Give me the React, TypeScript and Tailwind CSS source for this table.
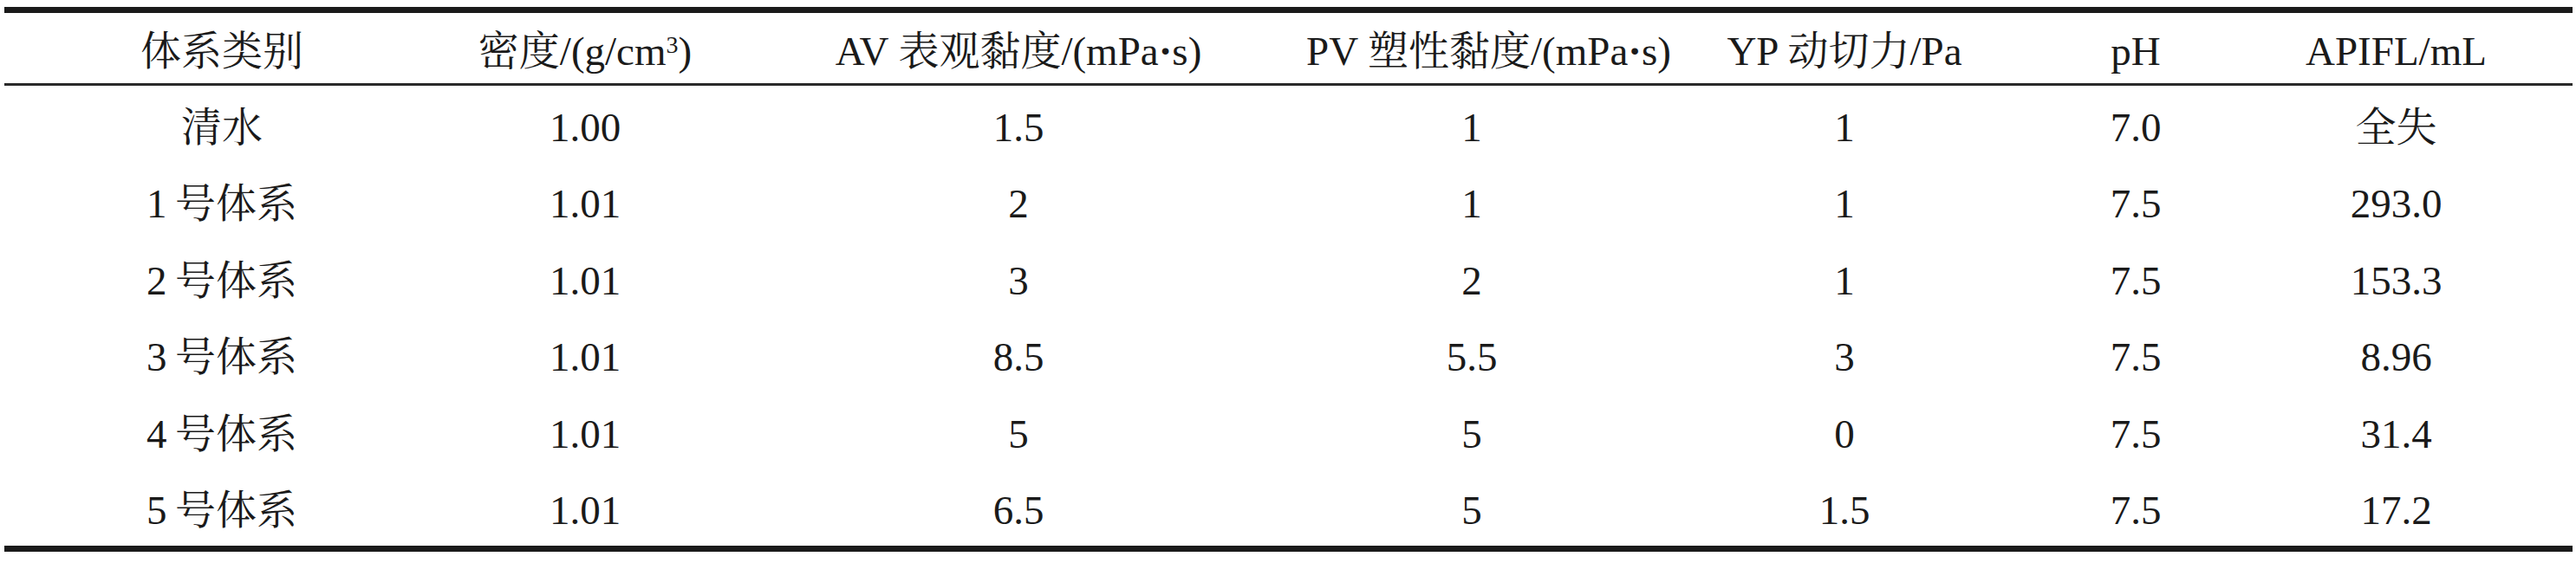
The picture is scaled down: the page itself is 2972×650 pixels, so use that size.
import React from "react";

const font = {
  fontFamily:
    '"Liberation Serif", "Noto Serif CJK SC", "Noto Sans CJK SC", serif',
};

const rows: string[][] = [
  ["清水", "1.00", "1.5", "1", "1", "7.0", "全失"],
  ["1\u2009号体系", "1.01", "2", "1", "1", "7.5", "293.0"],
  ["2\u2009号体系", "1.01", "3", "2", "1", "7.5", "153.3"],
  ["3\u2009号体系", "1.01", "8.5", "5.5", "3", "7.5", "8.96"],
  ["4\u2009号体系", "1.01", "5", "5", "0", "7.5", "31.4"],
  ["5\u2009号体系", "1.01", "6.5", "5", "1.5", "7.5", "17.2"],
];

const cols = "grid grid-cols-[502px_336px_664px_382px_478px_194px_1fr]";

function Dot() {
  return <span className="font-bold">·</span>;
}

export default function App() {
  return (
    <div className="w-[2972px] h-[650px] bg-white overflow-hidden" style={font}>
      <div className="ml-[5px] mt-[8px] w-[2963px] border-t-[7px] border-b-[7px] border-[#1a1a1a] text-[#1a1a1a] text-[47px] leading-none">
        <div className={`${cols} h-[84px] items-center pt-[8px] border-b-[3px] border-[#2a2a2a] whitespace-nowrap`}>
          <div className="text-center">体系类别</div>
          <div className="text-center">
            密度/(g/cm<sup className="text-[28px]">3</sup>)
          </div>
          <div className="text-center">
            AV 表观黏度/(mPa<Dot />s)
          </div>
          <div className="text-center">
            PV 塑性黏度/(mPa<Dot />s)
          </div>
          <div className="text-center">YP 动切力/Pa</div>
          <div className="text-center">pH</div>
          <div className="text-center">APIFL/mL</div>
        </div>
        {rows.map((r, i) => (
          <div key={i} className={`${cols} h-[88.5px] items-center pt-[8px] whitespace-nowrap`}>
            {r.map((c, j) => (
              <div key={j} className="text-center">
                {c}
              </div>
            ))}
          </div>
        ))}
      </div>
    </div>
  );
}
